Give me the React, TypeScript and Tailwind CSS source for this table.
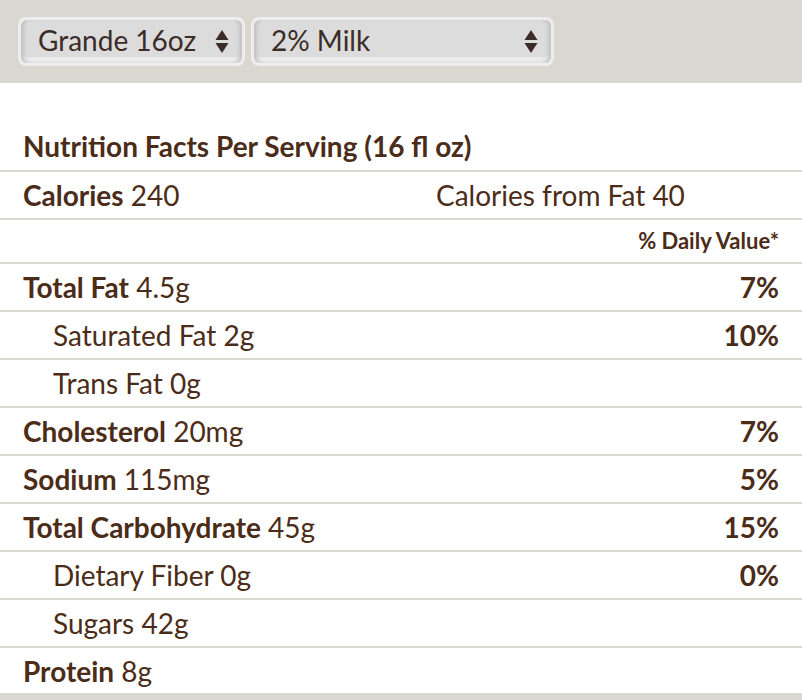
import { ReactNode } from 'react';

type Row = {
  label: string;
  value: string;
  dv?: string;
  sub?: boolean;
};

const rows: Row[] = [
  { label: 'Total Fat', value: '4.5g', dv: '7%' },
  { label: 'Saturated Fat', value: '2g', dv: '10%', sub: true },
  { label: 'Trans Fat', value: '0g', sub: true },
  { label: 'Cholesterol', value: '20mg', dv: '7%' },
  { label: 'Sodium', value: '115mg', dv: '5%' },
  { label: 'Total Carbohydrate', value: '45g', dv: '15%' },
  { label: 'Dietary Fiber', value: '0g', dv: '0%', sub: true },
  { label: 'Sugars', value: '42g', sub: true },
];

function Arrows() {
  return (
    <svg width="14" height="25" viewBox="0 0 14 25" className="shrink-0">
      <path d="M7 1 L13.5 11 L0.5 11 Z" fill="#3b2c27" />
      <path d="M0.5 14 L13.5 14 L7 24 Z" fill="#3b2c27" />
    </svg>
  );
}

function FakeSelect({ width, children }: { width: string; children: ReactNode }) {
  return (
    <div className={`${width} h-[49px] rounded-[8px] bg-[#ededed] p-[3px]`}>
      <div className="h-full rounded-[6px] bg-[#dcdcdc] flex items-center pl-[17px] pr-[13px] shadow-[inset_5px_0_4px_-2px_#c2c2c2,inset_-5px_0_4px_-2px_#c2c2c2,inset_0_-10px_0_-4px_#ebebeb]">
        <span className="flex-1 text-[28px] text-[#3b2c27] leading-none pb-[4px]">{children}</span>
        <Arrows />
      </div>
    </div>
  );
}

function Line({ children, className = '' }: { children: ReactNode; className?: string }) {
  return (
    <div className={`flex items-center justify-between px-[23px] border-b-2 border-[#dbd8d2] ${className}`}>
      {children}
    </div>
  );
}

export default function App() {
  return (
    <div className="w-[802px] h-[700px] bg-white text-[#4b2c18] overflow-hidden" style={{ fontFamily: 'Lato, "Open Sans", sans-serif' }}>
      <div className="h-[83px] bg-[#dad7d0] flex items-start gap-[6px] pt-[17px] pl-[18px]">
        <FakeSelect width="w-[227px]">Grande 16oz</FakeSelect>
        <FakeSelect width="w-[303px]">2% Milk</FakeSelect>
      </div>

      <div className="pt-[41px] text-[28px] leading-none">
        <Line className="h-[48px] pb-[2px]">
          <span className="font-bold">Nutrition Facts Per Serving (16 fl oz)</span>
        </Line>
        <Line className="h-[48px]">
          <span className="flex-1">
            <span className="font-bold">Calories</span> 240
          </span>
          <span className="w-[343px]">Calories from Fat 40</span>
        </Line>
        <Line className="h-[44px] justify-end">
          <span className="text-[22px] font-bold">% Daily Value*</span>
        </Line>
        {rows.map((r) => (
          <Line key={r.label} className="h-[48px]">
            <span className={r.sub ? 'pl-[30px]' : ''}>
              {r.sub ? r.label : <span className="font-bold">{r.label}</span>} {r.value}
            </span>
            {r.dv && <span className="font-bold">{r.dv}</span>}
          </Line>
        ))}
        <div className="h-[45px] flex items-center px-[23px]">
          <span>
            <span className="font-bold">Protein</span> 8g
          </span>
        </div>
        <div className="h-[20px] bg-[#dad7d0]" />
      </div>
    </div>
  );
}
